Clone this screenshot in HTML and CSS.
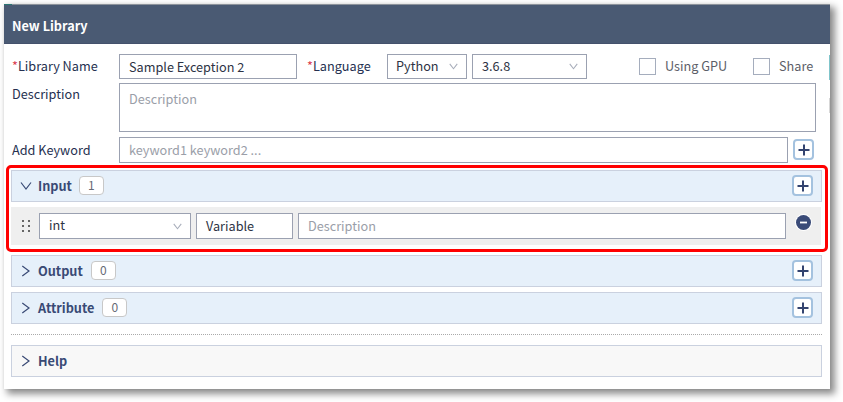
FILE: index.html
```
<!DOCTYPE html>
<html lang="en">
<head>
<meta charset="utf-8">
<title>New Library</title>
<link rel="stylesheet" href="styles.css">
</head>
<body>
<svg width="0" height="0" class="defs">
  <symbol id="down" viewBox="0 0 12 12"><path d="M1 2.5 L6 9 L11 2.5"/></symbol>
  <symbol id="right" viewBox="0 0 12 12"><path d="M2.3 1 L9 6 L2.3 11"/></symbol>
  <symbol id="plus" viewBox="0 0 12 12"><path d="M6 .5 V11.5 M.5 6 H11.5"/></symbol>
</svg>
<main class="dialog">
  <header class="title"><span>New Library</span></header>
  <i class="edge accent"></i><i class="edge muted"></i><i class="corner"></i>
  <div class="row name-row">
    <label class="label"><b>*</b>Library Name</label>
    <div class="field name">Sample Exception 2</div>
    <label class="label lang"><b>*</b>Language</label>
    <div class="field select python"><span>Python</span><svg class="caret"><use href="#down"/></svg></div>
    <div class="field select version"><span>3.6.8</span><svg class="caret"><use href="#down"/></svg></div>
    <div class="check gpu"><i class="box"></i><span>Using GPU</span></div>
    <div class="check share"><i class="box"></i><span>Share</span></div>
  </div>
  <div class="row desc-row">
    <label class="label">Description</label>
    <div class="field area hint">Description</div>
  </div>
  <div class="row key-row">
    <label class="label">Add Keyword</label>
    <div class="field keyword hint">keyword1 keyword2 ...</div>
    <div class="add"><svg><use href="#plus"/></svg></div>
  </div>
  <section class="highlight">
    <div class="bar"><svg class="arrow"><use href="#down"/></svg><strong>Input</strong><span class="count">1</span><div class="add"><svg><use href="#plus"/></svg></div></div>
    <div class="entry">
      <svg class="grip" viewBox="0 0 8 12"><path d="M0 0h2v2H0zM6 0h2v2H6zM0 5h2v2H0zM6 5h2v2H6zM0 10h2v2H0zM6 10h2v2H6z"/></svg>
      <div class="field select type"><span>int</span><svg class="caret"><use href="#down"/></svg></div>
      <div class="field variable">Variable</div>
      <div class="field detail hint">Description</div>
      <svg class="remove" viewBox="0 0 17 17"><circle cx="8.5" cy="8.5" r="8.5" fill="#fff"/><circle cx="8.5" cy="8.5" r="7.5" fill="#3a4b78"/><path d="M5 8.5h7" stroke="#fff" stroke-width="1.8"/></svg>
    </div>
  </section>
  <div class="bar output"><svg class="arrow"><use href="#right"/></svg><strong>Output</strong><span class="count">0</span><div class="add"><svg><use href="#plus"/></svg></div></div>
  <div class="bar attribute"><svg class="arrow"><use href="#right"/></svg><strong>Attribute</strong><span class="count">0</span><div class="add"><svg><use href="#plus"/></svg></div></div>
  <hr class="rule">
  <div class="bar help"><svg class="arrow"><use href="#right"/></svg><strong>Help</strong></div>
</main>
</body>
</html>
```
FILE: styles.css
```
* { box-sizing: border-box; }
body { margin: 0; background: #fff; height: 402px; overflow: hidden; font: 12.7px/20px "Noto Sans CJK KR", "Noto Sans", sans-serif; color: #253050; }
.defs { position: absolute; }
.dialog { position: relative; width: 826px; height: 385px; margin: 4px 0 0 4px; background: #fff; box-shadow: 4px 4px 7px 1px rgba(0,0,0,.45), 0 0 3px rgba(0,0,0,.06); }
.title { height: 40px; display: flex; align-items: center; padding: 3px 0 0 8px; background: #4a5a73; border-top: 1px solid #8d939b; border-bottom: 1px solid #44516c; color: #fff; font-weight: 700; }
.edge { position: absolute; right: 0; width: 1px; }
.accent { top: 51px; height: 25px; background: #80c5cb; }
.muted { top: 94px; height: 15px; background: #d7d7d7; }
.corner { position: absolute; top: 0; left: 0; width: 8px; height: 1px; background: #2b7774; }
.row { display: flex; padding-left: 8px; white-space: nowrap; }
.label { width: 107px; flex: none; }
.label b { color: #d9364a; font-weight: 400; }
.field { flex: none; height: 26px; border: 1px solid #9ba1b1; background: #fff; padding: 0 9px; line-height: 24px; white-space: nowrap; color: #2d3344; }
.field.hint { color: #9a9ea8; }
.select { display: flex; align-items: center; justify-content: space-between; padding-right: 8px; line-height: 22px; }
.select span { position: relative; top: -1px; }
svg { fill: none; stroke: currentColor; }
.caret { width: 9px; height: 9px; color: #a7adba; stroke-width: 1.4; }
.name-row { margin-top: 10px; height: 25px; line-height: 23px; }
.name-row .field { height: 25px; }
.name { width: 178px; }
.lang { width: 80px; margin-left: 10px; }
.python { width: 80px; padding-left: 8px; }
.version { width: 115px; margin-left: 5px; }
.check { display: flex; align-items: center; color: #5c5e68; }
.check span { position: relative; top: -1px; }
.box { width: 17px; height: 17px; margin: 0 9px 1px 0; border: 1px solid #a5adbd; }
.gpu { margin-left: 52px; width: 114px; }
.desc-row { margin-top: 4px; line-height: 21px; }
.field.area { width: 697px; height: 49px; line-height: 29px; }
.key-row { margin-top: 5px; height: 26px; line-height: 25px; }
.keyword { width: 669px; }
.add { width: 21px; height: 21px; flex: none; display: flex; align-items: center; justify-content: center; border: 2px solid #a4c2df; border-radius: 4px; background: #fff; color: #33436f; }
.add svg { width: 12px; height: 12px; stroke-width: 2; }
.key-row .add { margin: 2px 0 0 5px; }
.highlight { width: 822px; height: 87px; margin: 2px 0 0 2px; border: 3px solid red; border-radius: 5px; padding: 2px 2px; }
.bar { width: 811px; height: 32px; display: flex; align-items: center; padding: 0 8px 1px 9px; border: 1px solid #cad1df; background: #e6f0fa; color: #394a75; }
.bar strong { line-height: 18px; padding-top: 1px; }
.bar .add { margin-left: auto; }
.arrow { width: 12px; height: 12px; margin: 0 6px 0 -1px; stroke-width: 1.2; }
.count { width: 25px; height: 19px; margin-left: 7px; border: 1px solid #c8c8c8; border-radius: 4px; background: #fff; color: #666a75; text-align: center; font-size: 12px; line-height: 16px; }
.output .count { margin-left: 8px; }
.attribute .count { margin-left: 8px; }
.entry { width: 810px; height: 38px; margin-top: 5px; display: flex; align-items: center; background: #efefef; padding-left: 11px; }
.grip { width: 8px; height: 12px; margin-right: 9px; fill: #666; stroke: none; }
.type { width: 152px; }
.variable { width: 97px; margin-left: 5px; }
.detail { width: 488px; margin-left: 5px; }
.remove { width: 17px; height: 17px; margin: 0 0 7px 9px; stroke: none; }
.output { margin: 3px 0 0 7px; }
.attribute { margin: 5px 0 0 7px; }
.rule { width: 811px; margin: 10px 0 0 7px; border: 0; border-top: 1px dotted #aaa; }
.help { margin: 10px 0 0 7px; background: #f8f8f8; }
```
